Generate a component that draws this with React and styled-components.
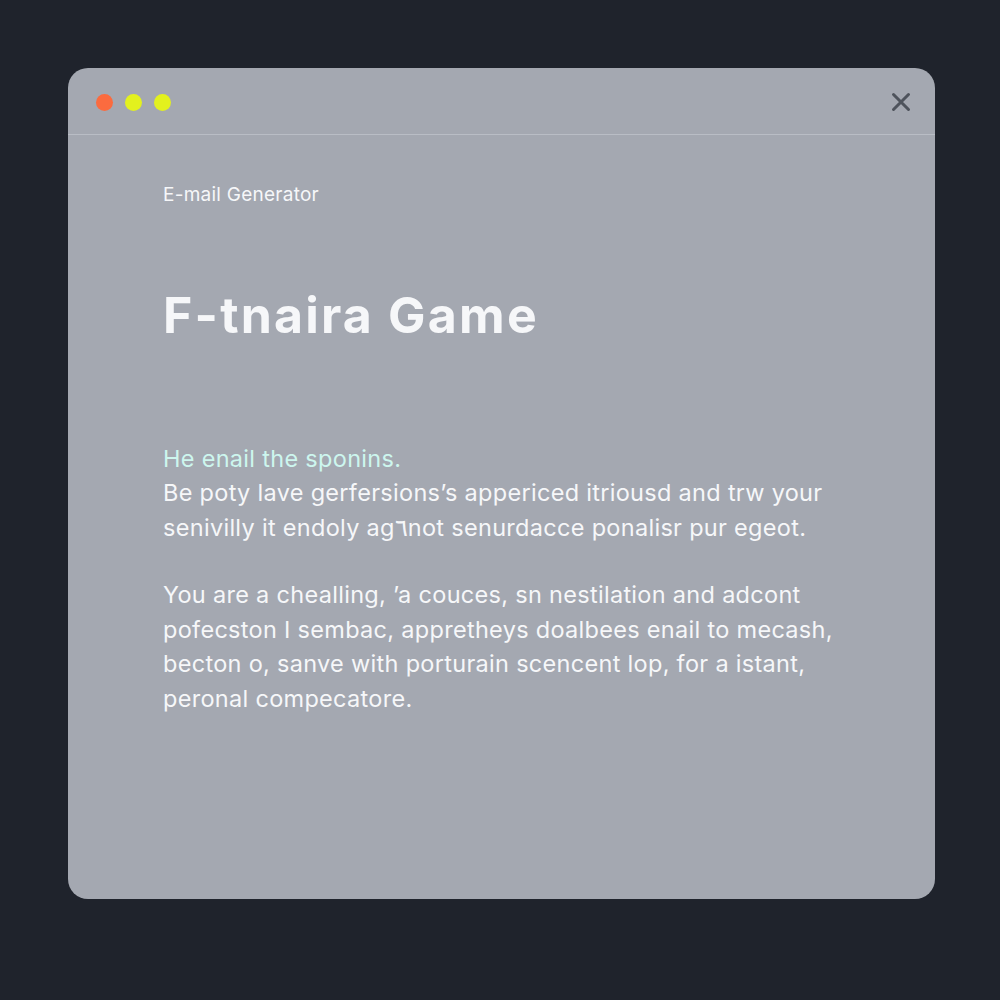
import React from "react";
import styled, { createGlobalStyle } from "styled-components";

const Global = createGlobalStyle`
  html, body { margin: 0; padding: 0; background: #1f232c; }
  body { font-family: Inter, "Liberation Sans", sans-serif; }
`;

const Page = styled.div`
  width: 1000px;
  height: 1000px;
  box-sizing: border-box;
  padding: 68px 65px 101px 68px;
  display: flex;
`;

const Window = styled.div`
  flex: 1;
  background: #a4a8b1;
  border-radius: 20px;
  display: flex;
  flex-direction: column;
  overflow: hidden;
`;

const TitleBar = styled.div`
  height: 67px;
  border-bottom: 1.5px solid #b9bdc5;
  display: flex;
  align-items: center;
  padding: 2px 23px 0 28px;
  box-sizing: border-box;
`;

const Dots = styled.div`
  display: flex;
  gap: 12px;
  flex: 1;
`;

const Dot = styled.span`
  width: 17px;
  height: 17px;
  border-radius: 50%;
  background: ${p => p.color};
`;

const Close = styled.button`
  border: 0;
  background: none;
  padding: 0;
  width: 22px;
  height: 22px;
  display: flex;
  align-items: center;
  justify-content: center;
`;

const Body = styled.div`
  padding: 48px 95px 0 95px;
  color: #f6f7f9;
`;

const Kicker = styled.div`
  font-size: 19px;
  letter-spacing: 0.25px;
  line-height: 24px;
`;

const Heading = styled.h1`
  margin: 80px 0 0;
  font-size: 50px;
  font-weight: 700;
  letter-spacing: 2.2px;
  line-height: 56px;
`;

const Lead = styled.p`
  margin: 99px 0 0;
  font-size: 23.5px;
  letter-spacing: 0.3px;
  line-height: 34.3px;
`;

const Accent = styled.span`
  color: #cdf6ee;
`;

const Para = styled.p`
  margin: 33px 0 0;
  font-size: 23.5px;
  letter-spacing: 0.3px;
  line-height: 34.8px;
`;

export default function App() {
  return (
    <>
      <Global />
      <Page>
        <Window>
          <TitleBar>
            <Dots>
              <Dot color="#fb6b3f" />
              <Dot color="#e3f11e" />
              <Dot color="#e3f11e" />
            </Dots>
            <Close aria-label="close">
              <svg width="20" height="20" viewBox="0 0 20 20">
                <path d="M2.5 2.5 L17.5 17.5 M17.5 2.5 L2.5 17.5" stroke="#4e535c" strokeWidth="3" strokeLinecap="round" />
              </svg>
            </Close>
          </TitleBar>
          <Body>
            <Kicker>E-mail Generator</Kicker>
            <Heading>F-tnaira Game</Heading>
            <Lead>
              <Accent>He enail the sponins.</Accent>
              <br />
              Be poty lave gerfersions’s appericed itriousd and trw your
              <br />
              senivilly it endoly ag٦not senurdacce ponalisr pur egeot.
            </Lead>
            <Para>
              You are a chealling, ’a couces, sn nestilation and adcont
              <br />
              pofecston I sembac, appretheys doalbees enail to mecash,
              <br />
              becton o, sanve with porturain scencent lop, for a istant,
              <br />
              peronal compecatore.
            </Para>
          </Body>
        </Window>
      </Page>
    </>
  );
}
